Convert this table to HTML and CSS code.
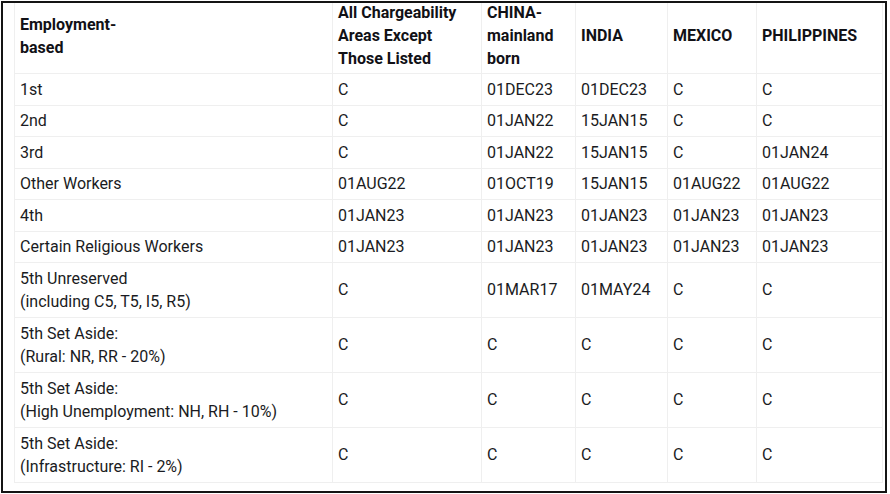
FILE: index.html
```html
<!DOCTYPE html>
<html lang="en">
<head>
<meta charset="utf-8">
<title>Employment-based Final Action Dates</title>
<link rel="stylesheet" href="styles.css">
</head>
<body>
<div class="frame">
  <table class="bulletin">
    <colgroup>
      <col class="c-cat">
      <col class="c-all">
      <col class="c-china">
      <col class="c-india">
      <col class="c-mexico">
      <col class="c-phil">
    </colgroup>
    <thead>
      <tr>
        <th>Employment-<br>based</th>
        <th>All Chargeability Areas Except Those Listed</th>
        <th>CHINA-<br>mainland born</th>
        <th>INDIA</th>
        <th>MEXICO</th>
        <th>PHILIPPINES</th>
      </tr>
    </thead>
    <tbody>
      <tr><td>1st</td><td>C</td><td>01DEC23</td><td>01DEC23</td><td>C</td><td>C</td></tr>
      <tr><td>2nd</td><td>C</td><td>01JAN22</td><td>15JAN15</td><td>C</td><td>C</td></tr>
      <tr><td>3rd</td><td>C</td><td>01JAN22</td><td>15JAN15</td><td>C</td><td>01JAN24</td></tr>
      <tr><td>Other Workers</td><td>01AUG22</td><td>01OCT19</td><td>15JAN15</td><td>01AUG22</td><td>01AUG22</td></tr>
      <tr><td>4th</td><td>01JAN23</td><td>01JAN23</td><td>01JAN23</td><td>01JAN23</td><td>01JAN23</td></tr>
      <tr><td>Certain Religious Workers</td><td>01JAN23</td><td>01JAN23</td><td>01JAN23</td><td>01JAN23</td><td>01JAN23</td></tr>
      <tr><td>5th Unreserved<br>(including C5, T5, I5, R5)</td><td>C</td><td>01MAR17</td><td>01MAY24</td><td>C</td><td>C</td></tr>
      <tr><td>5th Set Aside:<br>(Rural: NR, RR - 20%)</td><td>C</td><td>C</td><td>C</td><td>C</td><td>C</td></tr>
      <tr><td>5th Set Aside:<br>(High Unemployment: NH, RH - 10%)</td><td>C</td><td>C</td><td>C</td><td>C</td><td>C</td></tr>
      <tr><td>5th Set Aside:<br>(Infrastructure: RI - 2%)</td><td>C</td><td>C</td><td>C</td><td>C</td><td>C</td></tr>
    </tbody>
  </table>
</div>
</body>
</html>
```

FILE: styles.css
```css
html, body {
  margin: 0;
  padding: 0;
  background: #ffffff;
}

body {
  font-family: Roboto, "Liberation Sans", Arial, sans-serif;
  color: #1a1b22;
}

.frame {
  margin: 1px 0 0 1px;
  width: 882px;
  height: 488px;
  border: 2px solid #141414;
  overflow: hidden;
  background: #ffffff;
}

.bulletin {
  margin: -6px 0 0 11px;
  width: 868px;
  table-layout: fixed;
  border-collapse: collapse;
  font-size: 16px;
}

.c-cat { width: 318px; }
.c-all { width: 149px; }
.c-china { width: 94px; }
.c-india { width: 92px; }
.c-mexico { width: 89px; }
.c-phil { width: 126px; }

.bulletin th,
.bulletin td {
  border: 1px solid #efefef;
  text-align: left;
  vertical-align: middle;
}

.bulletin th {
  font-weight: 700;
  line-height: 23px;
  color: #111116;
  padding: 3px 5px;
}

.bulletin td {
  font-weight: 400;
  line-height: 23.5px;
  padding: 3.5px 5px;
}
```
